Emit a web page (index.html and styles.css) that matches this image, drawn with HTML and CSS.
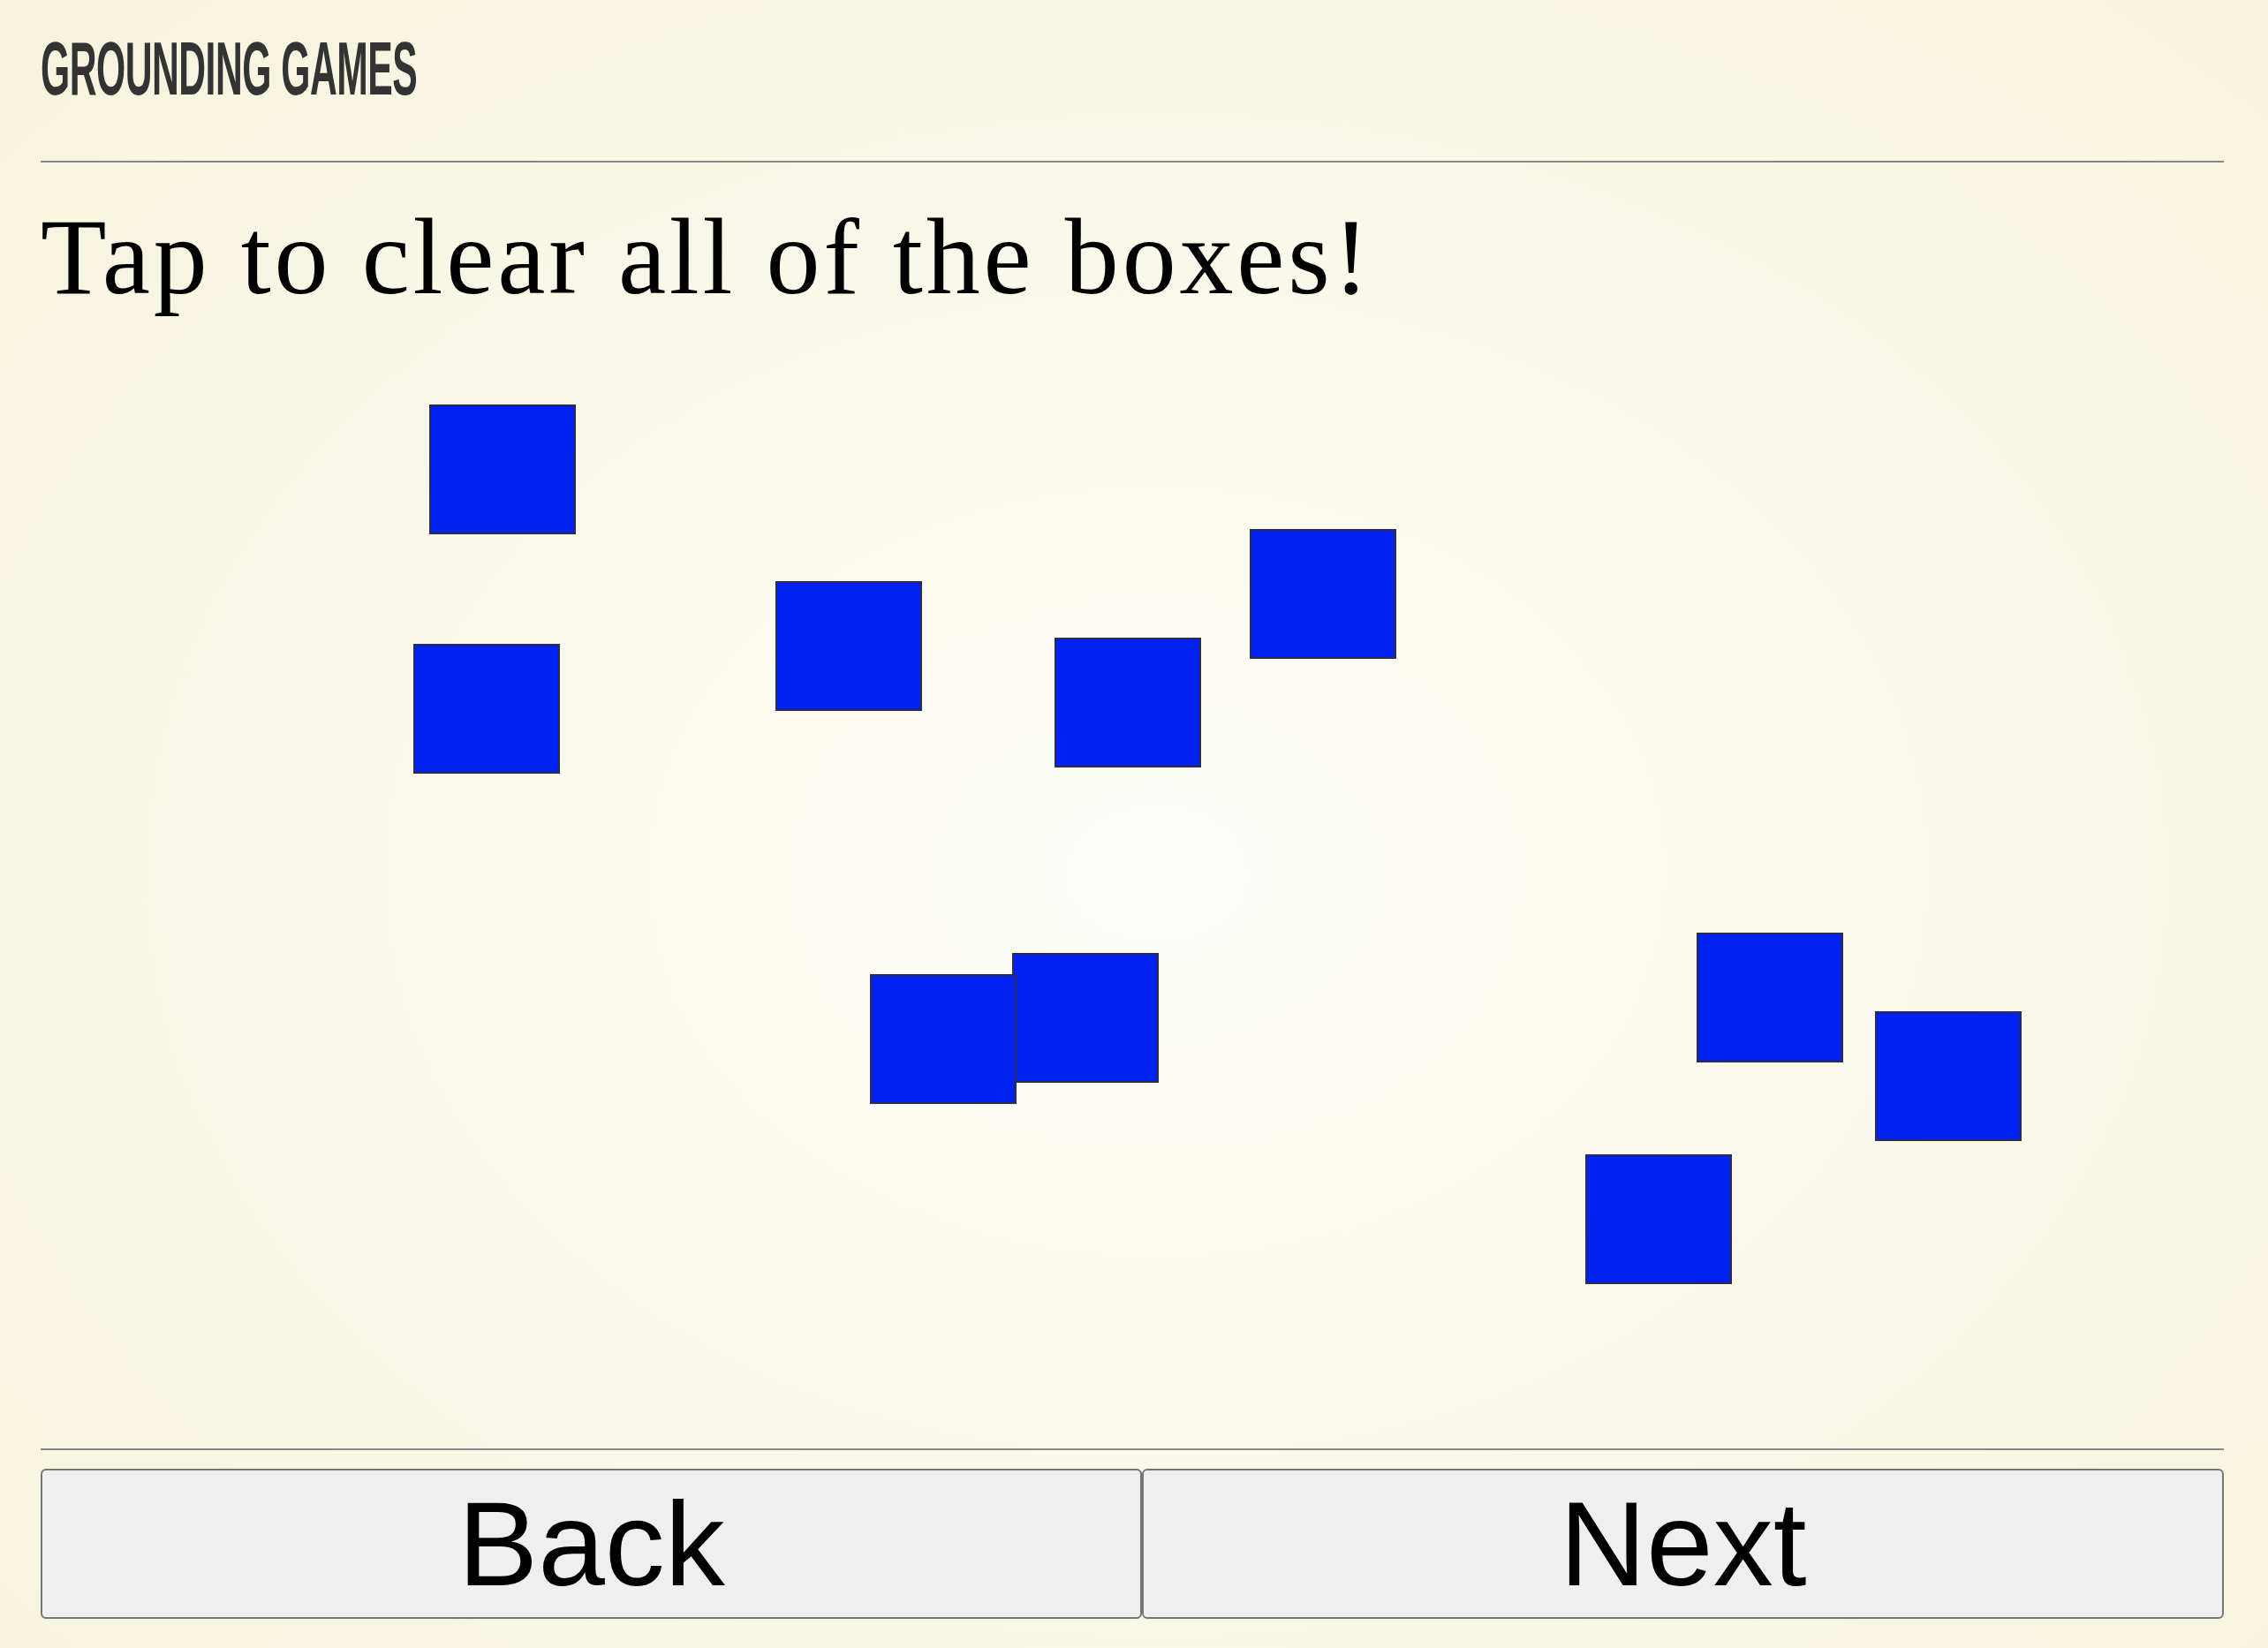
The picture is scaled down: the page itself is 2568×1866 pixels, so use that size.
FILE: index.html
```html
<!DOCTYPE html>
<html lang="en">
<head>
<meta charset="utf-8">
<title>Grounding Games</title>
<link rel="stylesheet" href="styles.css">
</head>
<body>
<div class="page">
  <header class="site-header">
    <div class="brand">GROUNDING GAMES</div>
  </header>
  <h1 class="prompt">Tap to clear all of the boxes!</h1>
  <main class="game">
    <div class="box" style="left:440px;top:106px"></div>
    <div class="box" style="left:422px;top:377px"></div>
    <div class="box" style="left:832px;top:306px"></div>
    <div class="box" style="left:1148px;top:370px"></div>
    <div class="box" style="left:1369px;top:247px"></div>
    <div class="box" style="left:1100px;top:727px"></div>
    <div class="box" style="left:939px;top:751px"></div>
    <div class="box" style="left:1875px;top:704px"></div>
    <div class="box" style="left:2077px;top:793px"></div>
    <div class="box" style="left:1749px;top:955px"></div>
  </main>
  <footer class="nav">
    <button class="nav-btn" type="button">Back</button>
    <button class="nav-btn" type="button">Next</button>
  </footer>
</div>
</body>
</html>
```
FILE: styles.css
```css
html, body {
  margin: 0;
  padding: 0;
  height: 100%;
}

body {
  background: radial-gradient(ellipse farthest-corner at 51% 53%, #fefefb 0%, #fbfaee 35%, #f6f3dc 100%);
  font-family: "Liberation Sans", Arial, sans-serif;
  overflow: hidden;
}

.page {
  box-sizing: border-box;
  height: 1866px;
  padding: 0 50px 0 46px;
  display: flex;
  flex-direction: column;
}

.site-header {
  padding: 34px 0 62px 0;
  border-bottom: 2px solid #888888;
}

.brand {
  font-family: "Liberation Sans", Arial, sans-serif;
  font-weight: 700;
  font-size: 86px;
  line-height: 1;
  height: 86px;
  color: #333333;
  letter-spacing: -1px;
  white-space: nowrap;
  transform: scaleX(0.496);
  transform-origin: left center;
}

.prompt {
  margin: 46px 0 0 0;
  font-family: "Liberation Serif", "Times New Roman", serif;
  font-weight: 400;
  font-size: 122px;
  line-height: 1;
  letter-spacing: 3.8px;
  color: #000000;
  white-space: nowrap;
}

.game {
  flex: 1;
  position: relative;
}

.box {
  position: absolute;
  box-sizing: border-box;
  width: 166px;
  height: 147px;
  background: #0021f0;
  border: 2px solid #2b2d4a;
}

.nav {
  border-top: 2px solid #888888;
  padding: 21px 0 33px 0;
  display: flex;
}

.nav-btn {
  flex: 1 1 auto;
  height: 170px;
  margin: 0;
  padding: 0;
  box-sizing: border-box;
  background: #efefef;
  border: 2px solid #767676;
  border-radius: 6px;
  font-family: "Liberation Sans", Arial, sans-serif;
  font-size: 136px;
  line-height: 1;
  color: #000000;
  display: flex;
  align-items: center;
  justify-content: center;
}
```
